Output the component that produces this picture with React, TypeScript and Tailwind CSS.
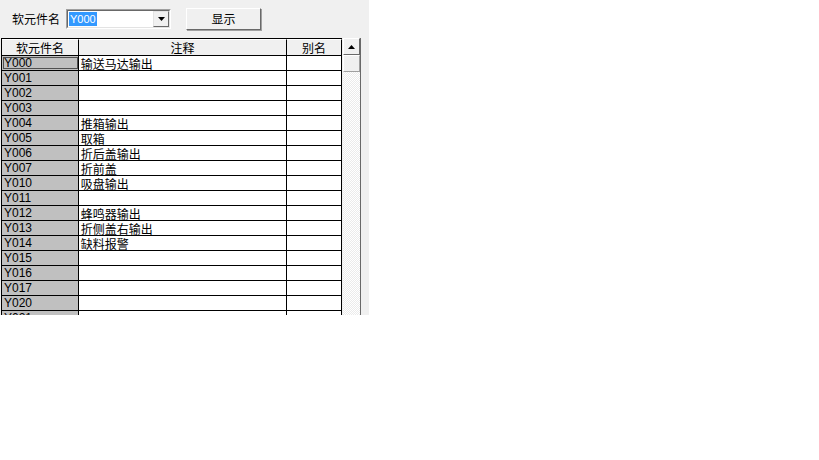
import React from "react";

const rows: [string, string][] = [
  ["Y000", "输送马达输出"],
  ["Y001", ""],
  ["Y002", ""],
  ["Y003", ""],
  ["Y004", "推箱输出"],
  ["Y005", "取箱"],
  ["Y006", "折后盖输出"],
  ["Y007", "折前盖"],
  ["Y010", "吸盘输出"],
  ["Y011", ""],
  ["Y012", "蜂鸣器输出"],
  ["Y013", "折侧盖右输出"],
  ["Y014", "缺料报警"],
  ["Y015", ""],
  ["Y016", ""],
  ["Y017", ""],
  ["Y020", ""],
  ["Y021", ""],
];

const cjk = "font-['Noto_Sans_CJK_SC','Noto_Sans_CJK_JP',sans-serif]";
const lat = "font-['Liberation_Sans',sans-serif]";

export default function App() {
  return (
    <div className="w-[819px] h-[460px] bg-white overflow-hidden">
      <div className="w-[369px] h-[315px] bg-[#f0f0f0] overflow-hidden flex flex-col">
        {/* toolbar */}
        <div className="h-[38px] shrink-0 flex items-start">
          <span className={`${cjk} text-[12px] leading-[14px] text-black ml-[12px] mt-[12px]`}>软元件名</span>
          <div className="ml-[6px] mt-[9px] w-[105px] h-[20px] bg-white border border-t-[#a0a0a0] border-l-[#a0a0a0] border-b-white border-r-white flex items-center">
            <div className="flex-1 h-full border border-t-[#696969] border-l-[#696969] border-b-[#e3e3e3] border-r-[#e3e3e3] flex items-center pl-[1px]">
              <span className={`${lat} text-[11px] leading-[14px] bg-[#3399ff] text-white px-[1px]`}>Y000</span>
              <div className="ml-auto w-[16px] h-[16px] bg-[#f0f0f0] border border-t-[#e3e3e3] border-l-[#e3e3e3] border-b-[#696969] border-r-[#696969] flex items-center justify-center">
                <svg width="7" height="4" viewBox="0 0 7 4"><path d="M0 0h7L3.5 4z" fill="#000" /></svg>
              </div>
            </div>
          </div>
          <div className="ml-[15px] mt-[8px] w-[75px] h-[22px] bg-[#f0f0f0] border border-t-white border-l-white border-b-[#696969] border-r-[#696969] shadow-[1px_1px_0_#a0a0a0] flex items-center justify-center">
            <span className={`${cjk} text-[12px] leading-[14px] text-black`}>显示</span>
          </div>
        </div>
        {/* grid + scrollbar */}
        <div className="flex ml-[1px] shrink-0">
          <div className="w-[341px] border-t border-l border-black">
            <div className="flex h-[17px] bg-[#f0f0f0] border-b border-black">
              <div className={`w-[77px] border-r border-black ${cjk} text-[12px] leading-[15px] text-center text-black border-t border-t-white`}>软元件名</div>
              <div className={`w-[209px] border-r border-black ${cjk} text-[12px] leading-[15px] text-center text-black border-t border-t-white`}>注释</div>
              <div className={`w-[55px] border-r border-black ${cjk} text-[12px] leading-[15px] text-center text-black border-t border-t-white`}>别名</div>
            </div>
            {rows.map(([k, v], i) => (
              <div key={k} className="flex h-[15px] border-b border-black">
                <div className={`w-[77px] border-r border-black bg-[#c0c0c0] ${lat} text-[12px] leading-[14px] text-black pl-[2px] ${i === 0 ? "outline outline-1 outline-[#505050] -outline-offset-2" : ""}`}>{k}</div>
                <div className={`w-[209px] border-r border-black bg-white ${cjk} text-[12px] leading-[13px] pt-[1px] text-black pl-[2px] whitespace-nowrap`}>{v}</div>
                <div className="w-[55px] border-r border-black bg-white" />
              </div>
            ))}
          </div>
          <div className="ml-[1px] w-[18px] h-[277px] flex flex-col border-r border-[#696969]">
            <div className="h-[17px] bg-[#f0f0f0] border border-t-white border-l-white border-b-[#696969] border-r-[#696969] flex items-center justify-center">
              <svg width="7" height="4" viewBox="0 0 7 4"><path d="M3.5 0L7 4H0z" fill="#000" /></svg>
            </div>
            <div className="h-[17px] bg-[#f0f0f0] border border-t-white border-l-white border-b-[#a0a0a0] border-r-[#a0a0a0]" />
            <div className="flex-1 bg-[repeating-conic-gradient(#ffffff_0_25%,#ebebeb_0_50%)] bg-[length:2px_2px]" />
          </div>
        </div>
      </div>
    </div>
  );
}
